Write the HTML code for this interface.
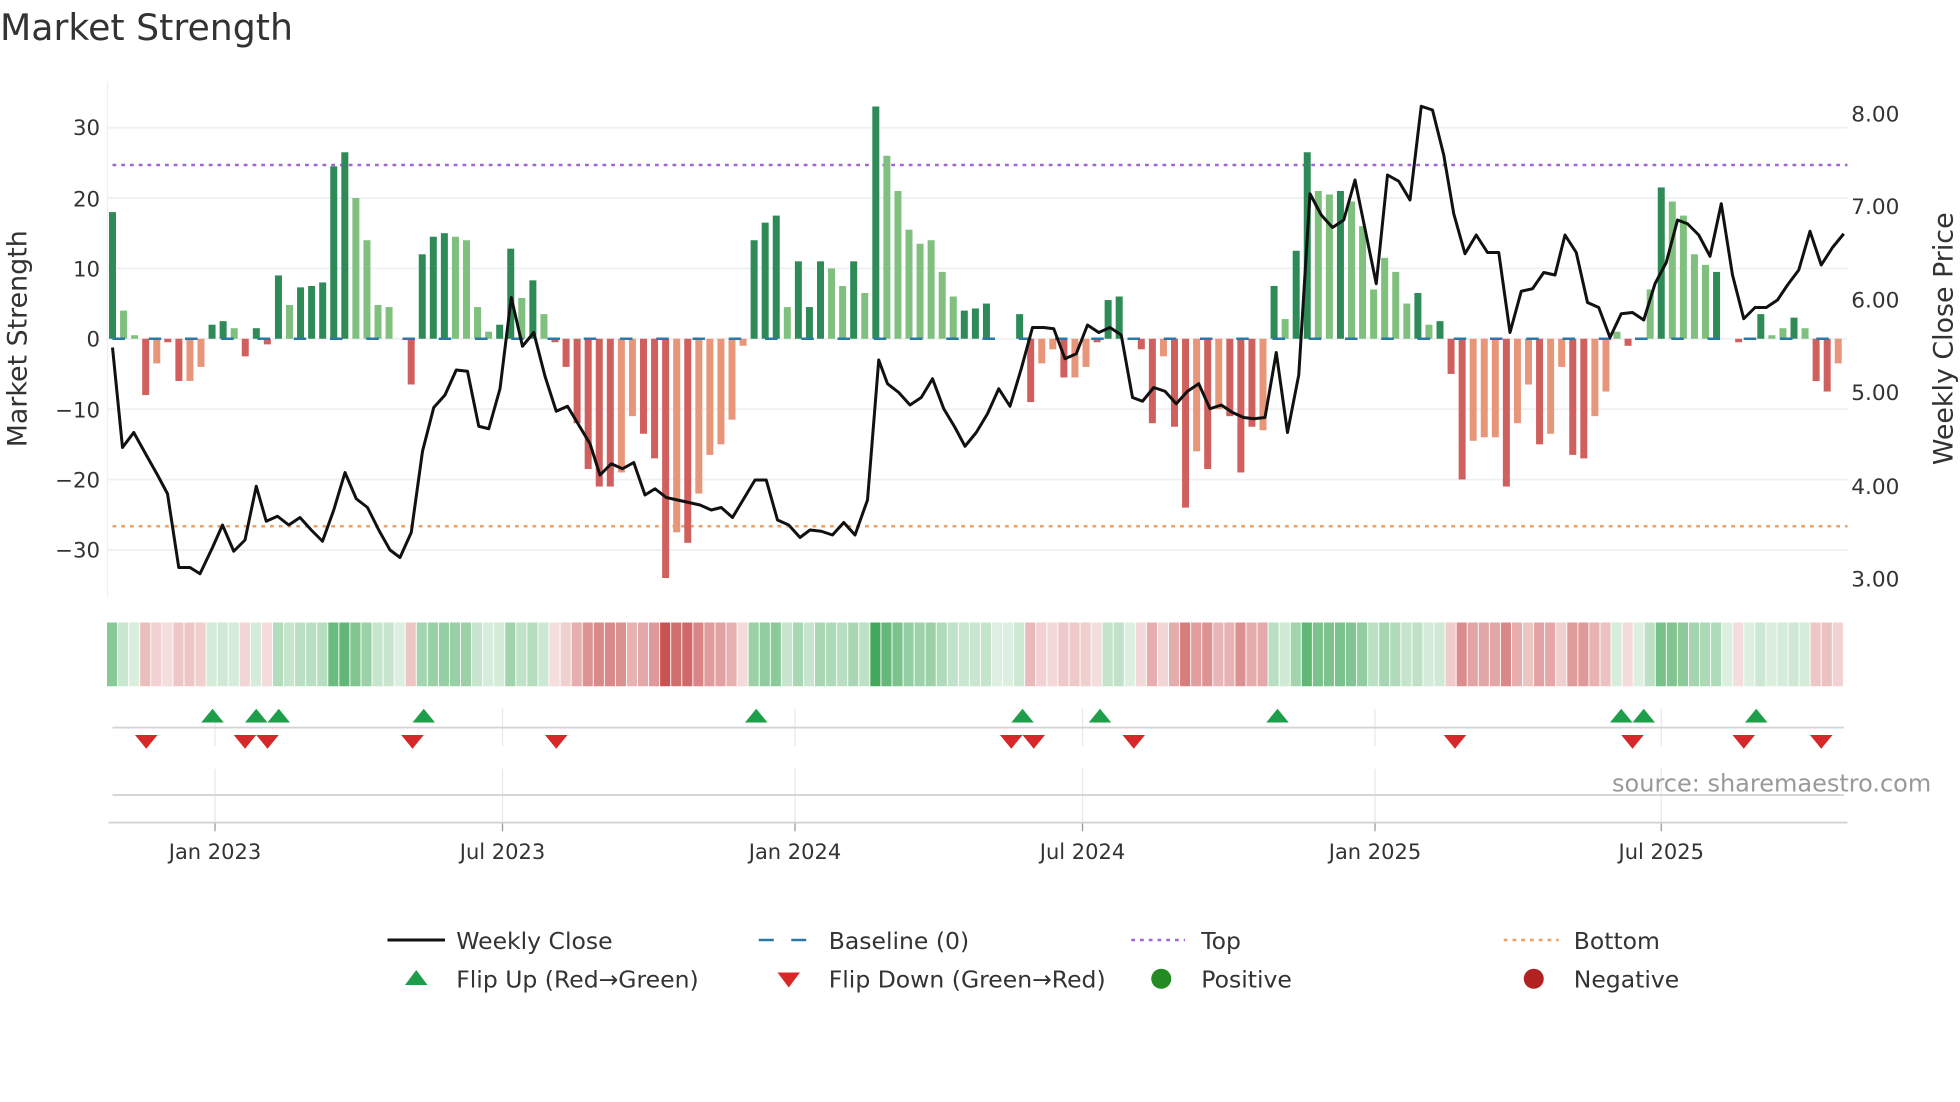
<!DOCTYPE html>
<html><head><meta charset="utf-8"><style>
html,body{margin:0;padding:0;background:#fff;width:1960px;height:1102px;overflow:hidden}
svg{display:block}
text{font-family:"DejaVu Sans","Liberation Sans",sans-serif;fill:#333}
</style></head><body>
<svg id="s" width="1960" height="1102" viewBox="0 0 1568 881.6" xmlns="http://www.w3.org/2000/svg">
<text x="0" y="32" font-size="29">Market Strength</text>
<g id="grid"></g>
<line x1="86" y1="65" x2="86" y2="478" stroke="#eef0f4" stroke-width="1"/>
<line x1="90" y1="132" x2="1478" y2="132" stroke="#a066d3" stroke-width="2" stroke-dasharray="3 4"/>
<line x1="90" y1="421" x2="1478" y2="421" stroke="#f0a060" stroke-width="2" stroke-dasharray="3 4"/>
<g id="bars"></g>
<line x1="90" y1="271" x2="1478" y2="271" stroke="#2a78a8" stroke-width="2" stroke-dasharray="10 19"/>
<polyline id="price" fill="none" stroke="#111" stroke-width="2.4" stroke-linejoin="round"/>
<g id="heat"></g>
<g id="vgrid"></g>
<line x1="90" y1="582" x2="1475" y2="582" stroke="#d4d4d4" stroke-width="1.5"/>
<line x1="90" y1="636" x2="1475" y2="636" stroke="#d4d4d4" stroke-width="1.5"/>
<line x1="87" y1="658" x2="1478" y2="658" stroke="#d4d4d4" stroke-width="1.5"/>
<g id="tri"></g>
<text x="1545" y="633" font-size="19.2" text-anchor="end" style="fill:#999">source: sharemaestro.com</text>
<g font-size="16.8" text-anchor="middle">
<text x="172" y="687">Jan 2023</text><text x="402" y="687">Jul 2023</text><text x="636" y="687">Jan 2024</text>
<text x="866" y="687">Jul 2024</text><text x="1100" y="687">Jan 2025</text><text x="1329" y="687">Jul 2025</text>
</g>
<g font-size="17" text-anchor="end">
<text x="80" y="108">30</text><text x="80" y="165">20</text><text x="80" y="221">10</text><text x="80" y="277">0</text>
<text x="80" y="334">−10</text><text x="80" y="390">−20</text><text x="80" y="446">−30</text>
</g>
<g font-size="17.3">
<text x="1481" y="97">8.00</text><text x="1481" y="171">7.00</text><text x="1481" y="246">6.00</text>
<text x="1481" y="320">5.00</text><text x="1481" y="395">4.00</text><text x="1481" y="469">3.00</text>
</g>
<text font-size="21.5" text-anchor="middle" transform="translate(21,271) rotate(-90)">Market Strength</text>
<text font-size="21.5" text-anchor="middle" transform="translate(1562,271) rotate(-90)">Weekly Close Price</text>
<g font-size="18.8">
<line x1="310" y1="752" x2="356" y2="752" stroke="#111" stroke-width="2.4"/><text x="365" y="759">Weekly Close</text>
<line x1="607" y1="752" x2="650" y2="752" stroke="#2a78a8" stroke-width="2" stroke-dasharray="12 14"/><text x="663" y="759">Baseline (0)</text>
<line x1="905" y1="752" x2="948" y2="752" stroke="#a066d3" stroke-width="2" stroke-dasharray="3 4"/><text x="961" y="759">Top</text>
<line x1="1203" y1="752" x2="1247" y2="752" stroke="#f0a060" stroke-width="2" stroke-dasharray="3 4"/><text x="1259" y="759">Bottom</text>
<polygon points="324,788 342,788 333,776" fill="#1e9e4a"/><text x="365" y="790">Flip Up (Red→Green)</text>
<polygon points="622,778 640,778 631,790" fill="#d62828"/><text x="663" y="790">Flip Down (Green→Red)</text>
<circle cx="929" cy="783" r="8" fill="#228b22"/><text x="961" y="790">Positive</text>
<circle cx="1227" cy="783" r="8" fill="#b22222"/><text x="1259" y="790">Negative</text>
</g>
</svg>
<script>
var NS="http://www.w3.org/2000/svg";
function el(t,a,p){var e=document.createElementNS(NS,t);for(var k in a)e.setAttribute(k,a[k]);document.getElementById(p).appendChild(e);return e;}
for(var v=-30;v<=30;v+=10){var y=271-5.63*v;el("line",{x1:86,x2:1478,y1:y,y2:y,stroke:"#eef0f4","stroke-width":1.5},"grid");}
[172,402,636,866,1100,1329].forEach(function(x){
 el("line",{x1:x,x2:x,y1:567,y2:597,stroke:"#e6e8ec","stroke-width":1},"vgrid");
 el("line",{x1:x,x2:x,y1:615,y2:665,stroke:"#e6e8ec","stroke-width":1},"vgrid");
 el("line",{x1:x,x2:x,y1:658,y2:665,stroke:"#999","stroke-width":1},"vgrid");
});
var D="18d 4l .5l -8r -3.5o -.5r -6r -6o -4o 2d 2.5d 1.5l -2.5r 1.5d -.8r 9d 4.8l 7.3d 7.5d 8d 24.5d 26.5d 20l 14l 4.8l 4.5l 0l -6.5r 12d 14.5d 15d 14.5l 14l 4.5l 1l 2d 12.8d 5.8l 8.3d 3.5l -.5r -4r -12r -18.5r -21r -21r -19o -11o -13.5r -17r -34r -27.5o -29r -22o -16.5o -15o -11.5o -1o 14d 16.5d 17.5d 4.5l 11d 4.5d 11d 10l 7.5l 11d 6.5l 33d 26l 21l 15.5l 13.5l 14l 9.5l 6l 4d 4.3d 5d 0l 0l 3.5d -9r -3.5o -1.5o -5.5r -5.5o -4o -.5r 5.5d 6d 0l -1.5r -12r -2.5o -12.5r -24r -16o -18.5r -10o -11r -19r -12.5r -13o 7.5d 2.8l 12.5d 26.5d 21l 20.5l 21d 19.5l 16l 7l 11.5l 9.5l 5l 6.5d 2l 2.5d -5r -20r -14.5o -14o -14o -21r -12o -6.5o -15r -13.5o -4o -16.5r -17r -11o -7.5o 1l -1r 0l 7l 21.5d 19.5l 17.5l 12l 10.5l 9.5d 0l -.5r 0l 3.5d .5l 1.5l 3d 1.5l -6r -7.5r -3.5o".split(" ");
var C={d:"#2e8b57",l:"#80c07f",r:"#d0605e",o:"#e8967a"};
D.forEach(function(s,i){
 var v=parseFloat(s),c=s.slice(-1),x=90+8.85*i;
 if(v!==0){var y0=271,y1=271-5.63*v;el("rect",{x:x-2.8,y:Math.min(y0,y1),width:5.6,height:Math.abs(y1-y0),fill:C[c]},"bars");}
 var a=Math.min(1,0.18+Math.abs(v)/34*0.8);
 var col=v>=0?"rgba(60,165,85,"+a+")":"rgba(200,80,80,"+a+")";
 el("rect",{x:x-4.4,y:498,width:8.1,height:51,fill:col},"heat");
});
var P="90,278 98,358 107,346 117,364 126,380 134,395 143,454 152,454 160,459 170,438 178,420 187,441 196,432 205,389 213,417 222,413 231,420 240,414 249,424 258,433 267,408 276,378 285,399 294,406 303,424 312,440 320,446 329,426 338,361 347,326 356,316 365,296 374,297 383,341 391,343 400,311 409,238 418,277 427,266 436,301 445,329 454,325 463,340 472,355 480,380 489,371 498,375 507,370 516,396 524,391 533,398 542,400 551,402 560,404 569,408 577,406 586,414 595,399 604,384 613,384 622,416 631,420 640,430 648,424 657,425 666,428 675,418 684,428 694,400 703,288 710,307 719,314 728,324 737,318 746,303 755,327 764,342 772,357 781,346 790,331 799,311 808,325 817,295 826,262 835,262 843,263 852,287 861,283 870,260 879,266 888,262 897,268 906,318 914,321 923,310 932,313 941,323 950,313 959,307 968,327 977,324 986,330 995,334 1003,335 1012,334 1021,282 1030,346 1039,300 1048,155 1057,172 1066,182 1075,176 1084,144 1093,188 1101,227 1110,140 1119,145 1128,160 1137,85 1146,88 1155,124 1163,171 1172,203 1181,188 1190,202 1199,202 1208,266 1217,233 1226,231 1235,218 1244,220 1252,188 1261,202 1270,242 1279,246 1288,270 1297,251 1306,250 1315,256 1324,227 1333,210 1342,176 1350,179 1359,188 1368,205 1377,163 1386,220 1395,255 1404,246 1413,246 1422,240 1430,228 1439,216 1448,185 1457,212 1466,198 1475,187";
document.getElementById("price").setAttribute("points",P);
[170,205,223,339,605,818,880,1022,1297,1315,1405].forEach(function(x){el("polygon",{points:(x-9)+",578 "+(x+9)+",578 "+x+",567",fill:"#1e9e4a"},"tri");});
[117,196,214,330,445,809,827,907,1164,1306,1395,1457].forEach(function(x){el("polygon",{points:(x-9)+",588 "+(x+9)+",588 "+x+",599",fill:"#d62828"},"tri");});
</script>
</body></html>
